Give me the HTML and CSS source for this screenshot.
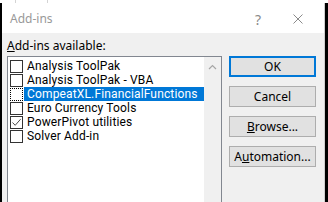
FILE: index.html
```html
<!DOCTYPE html>
<html>
<head>
<meta charset="utf-8">
<link rel="stylesheet" href="styles.css">
</head>
<body>
<div class="frame">
  <div class="topstrip"><span class="grid g1"></span><span class="grid g2"></span></div>
  <div class="dialog">
    <div class="titlebar">
      <span class="title">Add-ins</span>
      <span class="help">?</span>
      <svg class="close" width="10" height="10" viewBox="0 0 10 10"><path d="M0.5 0.5 L9.5 9.5 M9.5 0.5 L0.5 9.5" stroke="#8a8a8a" stroke-width="1" fill="none"/></svg>
    </div>
    <div class="body">
      <div class="left">
        <div class="label"><u>A</u>dd-ins available:</div>
        <div class="listbox">
          <div class="items">
            <div class="item"><span class="cb"></span><span class="text">Analysis ToolPak</span></div>
            <div class="item"><span class="cb"></span><span class="text">Analysis ToolPak - VBA</span></div>
            <div class="item sel"><span class="cb focus"></span><span class="text">CompeatXL.FinancialFunctions</span></div>
            <div class="item"><span class="cb"></span><span class="text">Euro Currency Tools</span></div>
            <div class="item"><span class="cb"><svg width="11" height="11" viewBox="0 0 11 11"><path d="M1.5 5.5 L4.2 8.3 L9.6 2.2" stroke="#4a4a4a" stroke-width="1" fill="none"/></svg></span><span class="text">PowerPivot utilities</span></div>
            <div class="item"><span class="cb"></span><span class="text">Solver Add-in</span></div>
          </div>
          <div class="scrollbar">
            <svg class="up" width="9" height="6" viewBox="0 0 9 6"><path d="M1 5 L4.5 1.5 L8 5" stroke="#a6a6a6" stroke-width="1.2" fill="none"/></svg>
          </div>
        </div>
      </div>
      <div class="buttons">
        <div class="btn default">OK</div>
        <div class="btn">Cancel</div>
        <div class="btn"><u>B</u>rowse...</div>
        <div class="btn">A<u>u</u>tomation...</div>
      </div>
    </div>
  </div>
</div>
</body>
</html>
```
FILE: styles.css
```css
html, body {
  margin: 0;
  padding: 0;
  background: #000;
}
.frame {
  width: 328px;
  height: 202px;
  background: #000;
  display: flex;
  flex-direction: column;
  overflow: hidden;
  font-family: "Noto Sans", "Open Sans", sans-serif;
  font-size: 12px;
  color: #000;
}
.topstrip {
  height: 3px;
  background: #fff;
  position: relative;
  flex: none;
}
.grid {
  position: absolute;
  top: 0;
  width: 1px;
  height: 3px;
  background: #d4d4d4;
}
.g1 { left: 15px; }
.g2 { left: 47px; }
.dialog {
  flex: 1;
  margin: 0 3px 0 2px;
  display: flex;
  flex-direction: column;
  border-right: 1px solid #cfcfcf;
  min-height: 0;
}
.titlebar {
  height: 30px;
  flex: none;
  background: #fff;
  display: flex;
  align-items: center;
  padding-left: 8px;
}
.title {
  color: #999;
  font-size: 12px;
  flex: 1;
}
.help {
  color: #8a8a8a;
  font-size: 14px;
  margin-right: 32px;
  margin-top: 2px;
}
.close {
  margin-right: 21px;
  margin-top: 2px;
}
.body {
  flex: 1;
  background: #f0f0f0;
  display: flex;
  padding: 5px 0 0 5px;
  min-height: 0;
}
.left {
  display: flex;
  flex-direction: column;
  width: 215px;
}
.label {
  height: 16px;
  line-height: 16px;
  margin-bottom: 2px;
}
.listbox {
  flex: 1;
  background: #fff;
  border: 1px solid #828790;
  display: flex;
  min-height: 200px;
}
.items {
  flex: 1;
  padding-top: 2px;
}
.item {
  height: 14px;
  display: flex;
  align-items: center;
  padding-left: 2px;
}
.cb {
  width: 11px;
  height: 11px;
  border: 1px solid #333;
  background: #fff;
  flex: none;
  display: flex;
}
.cb.focus {
  border: 1px dotted #000;
}
.text {
  flex: 1;
  height: 14px;
  line-height: 14px;
  padding-left: 3px;
  margin-left: 1px;
  white-space: nowrap;
  font-family: Roboto, "Noto Sans", sans-serif;
  font-size: 12px;
  letter-spacing: 0.15px;
}
.sel .text {
  background: #0078d7;
  color: #fff;
}
.scrollbar {
  width: 17px;
  background: #f0f0f0;
  display: flex;
  justify-content: center;
  padding-top: 7px;
  box-sizing: border-box;
}
.up {
  display: block;
}
.buttons {
  display: flex;
  flex-direction: column;
  gap: 9px;
  margin-left: 7px;
  padding-top: 18px;
}
.btn {
  width: 85px;
  height: 19px;
  border: 1px solid #adadad;
  background: #e1e1e1;
  text-align: center;
  line-height: 19px;
}
.btn.default {
  width: 83px;
  height: 17px;
  line-height: 17px;
  border: 2px solid #0078d7;
}
```
